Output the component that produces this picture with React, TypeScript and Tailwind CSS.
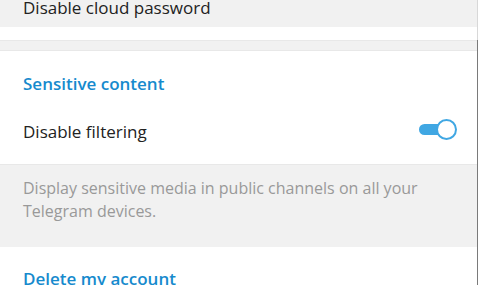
export default function App() {
  return (
    <div className="flex h-[285px] w-[478px] overflow-hidden bg-white font-['Open_Sans',sans-serif]">
      <div className="flex w-[477px] flex-col">
        {/* hovered row */}
        <div className="h-[27px] shrink-0 bg-[#f1f1f1] pl-[23px] text-[17px] leading-[15px] text-[#222]">
          Disable cloud password
        </div>
        <div className="h-[13px] shrink-0 bg-white" />
        {/* section divider */}
        <div className="h-[11px] shrink-0 border-y border-[#e8e8e8] bg-[#f1f1f1]" />

        {/* Sensitive content */}
        <div className="flex h-[113px] shrink-0 flex-col bg-white">
          <div className="pl-[23px] pt-[23px] text-[17px] font-semibold leading-[20px] text-[#168acd]">
            Sensitive content
          </div>
          <div className="flex items-start justify-between pl-[23px] pr-[20px] pt-[28px]">
            <span className="text-[17px] leading-[20px] text-[#222]">Disable filtering</span>
            <div className="relative -mt-[3px] h-[21px] w-[38px]">
              <div className="absolute left-0 top-[5px] h-[11px] w-[28px] rounded-full bg-[#40a7e3]" />
              <div className="absolute right-0 top-0 h-[21px] w-[21px] rounded-full border-2 border-[#40a7e3] bg-white" />
            </div>
          </div>
        </div>

        {/* description */}
        <div className="h-[83px] shrink-0 border-t border-[#e8e8e8] bg-[#f1f1f1] pl-[23px] pr-[20px] pt-[12px] text-[16px] leading-[23px] text-[#999]">
          Display sensitive media in public channels on all your Telegram devices.
        </div>

        <div className="h-[60px] shrink-0 bg-white pl-[23px] pt-[22px] text-[17px] font-semibold leading-[20px] text-[#168acd]">
          Delete my account
        </div>
      </div>
      <div className="flex w-px flex-col">
        <div className="h-[40px] bg-[#d8d8d8]" />
        <div className="flex-1 bg-[#7a7a7a]" />
      </div>
    </div>
  );
}
